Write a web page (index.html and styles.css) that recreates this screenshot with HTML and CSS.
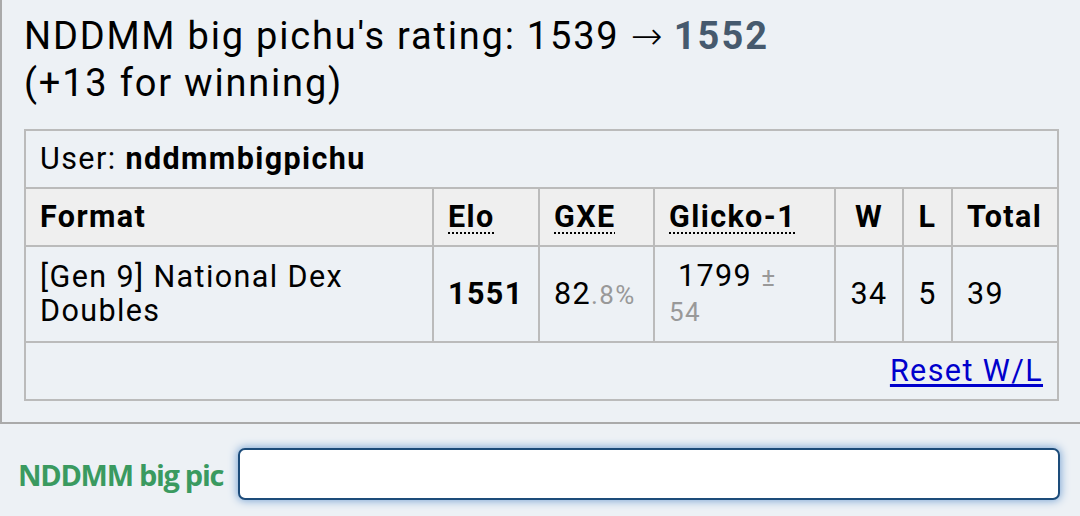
FILE: index.html
```html
<!DOCTYPE html>
<html lang="en">

<head>
    <meta charset="UTF-8">
    <meta name="viewport" content="width=device-width, initial-scale=1.0">
    <title>Rating</title>
    <link rel="stylesheet" href="styles.css">
</head>

<body>

    <div id="mensagens">
        <h2 class="titulo">NDDMM big pichu's rating: 1539 <span class="seta">&rarr;</span> <strong>1552</strong><br>(+13 for winning)</h2>
        <table class="ladder">
            <colgroup>
                <col class="colFormat">
                <col class="colElo">
                <col class="colGxe">
                <col class="colGlicko">
                <col class="colW">
                <col class="colL">
                <col class="colTotal">
            </colgroup>
            <tr>
                <td colspan="7">User: <strong>nddmmbigpichu</strong></td>
            </tr>
            <tr class="cabecalho">
                <th>Format</th>
                <th><abbr>Elo</abbr></th>
                <th><abbr>GXE</abbr></th>
                <th><abbr>Glicko-1</abbr></th>
                <th class="centro">W</th>
                <th class="centro">L</th>
                <th>Total</th>
            </tr>
            <tr class="dados">
                <td>[Gen 9] National Dex Doubles</td>
                <td><strong>1551</strong></td>
                <td>82<small>.8%</small></td>
                <td><span class="recuo">1799</span> <small>&plusmn;<br>54</small></td>
                <td class="centro">34</td>
                <td class="centro">5</td>
                <td>39</td>
            </tr>
            <tr>
                <td colspan="7" class="direita"><a href="#">Reset W/L</a></td>
            </tr>
        </table>
    </div>

    <div id="chatbox">
        <label class="nome" for="entrada">NDDMM big pichu</label>
        <input type="text" id="entrada" class="entrada">
    </div>

</body>

</html>
```

FILE: styles.css
```css
* {
    margin: 0;
    padding: 0;
    outline: none;
    box-sizing: border-box;
}

html,
body {
    width: 100%;
    height: 100%;
}

body {
    background-color: #edf1f5;
    font-family: Roboto, "Noto Sans", sans-serif;
    color: #000;
    overflow: hidden;
}

#mensagens {
    border-left: 2px solid #aaa;
    border-bottom: 2px solid #aaa;
    padding: 13px 23px 20px 22px;
    height: 424px;
}

.titulo {
    font-size: 38px;
    line-height: 47px;
    font-weight: normal;
    letter-spacing: 1.8px;
}

.titulo strong {
    color: #465a6e;
    letter-spacing: 2px;
}

.seta {
    font-family: "DejaVu Sans", sans-serif;
    font-weight: 200;
    font-size: 38px;
    letter-spacing: 0;
}

.ladder {
    margin-top: 22px;
    width: 1033px;
    border-collapse: collapse;
    table-layout: fixed;
    font-size: 30.5px;
    line-height: 34px;
    letter-spacing: 1.4px;
}

.colFormat { width: 408px; }
.colElo { width: 106px; }
.colGxe { width: 115px; }
.colGlicko { width: 181px; }
.colW { width: 68px; }
.colL { width: 49px; }
.colTotal { width: 106px; }

.ladder td,
.ladder th {
    border: 2px solid #bbb;
    padding: 11px 14px 11px 14px;
    text-align: left;
    vertical-align: middle;
}

.cabecalho th {
    background-color: #efefef;
    font-weight: bold;
}

.ladder abbr {
    text-decoration: underline dotted;
    text-underline-offset: 5px;
    text-decoration-thickness: 2px;
}

.dados td {
    padding-top: 12px;
    padding-bottom: 12px;
}

.ladder small {
    font-size: 26px;
    color: #999;
}

.recuo {
    padding-left: 9px;
}

.centro {
    text-align: center !important;
}

.direita {
    text-align: right !important;
}

.ladder a {
    color: #0000cc;
    text-decoration: underline;
    text-underline-offset: 3px;
}

#chatbox {
    display: flex;
    align-items: center;
    padding: 24px 20px 0 18px;
}

.nome {
    width: 206px;
    overflow: hidden;
    white-space: nowrap;
    color: #3a9a60;
    font-family: "Open Sans", sans-serif;
    font-weight: bold;
    font-size: 29px;
    letter-spacing: -1.3px;
    margin-right: 14px;
}

.entrada {
    flex: 1;
    height: 52px;
    border: 2px solid #1d4c7a;
    border-radius: 7px;
    background-color: #fff;
    box-shadow: 0 0 9px 1px #7fa8d6;
}
```
